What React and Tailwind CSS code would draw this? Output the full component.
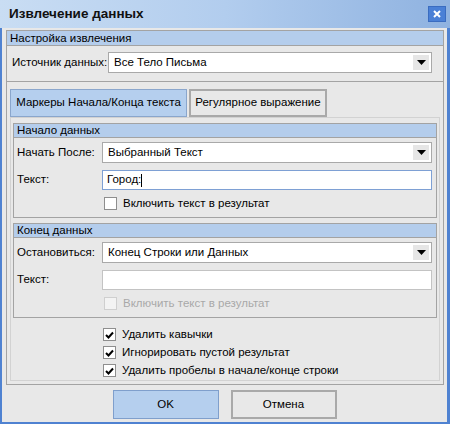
import React from "react";

const font = { fontFamily: '"Liberation Sans", Arial, sans-serif' };

const Arrow = () => (
  <div className="w-[16px] h-full bg-[#e6e6e6] flex items-center justify-center">
    <svg width="9" height="5" viewBox="0 0 9 5">
      <path d="M0 0 H9 L4.5 5 Z" fill="#000" />
    </svg>
  </div>
);

const Select = ({ value, h = "h-[21px]" }) => (
  <div className={`flex-1 ${h} bg-white border border-[#a9a9a9] flex items-center`}>
    <span className="flex-1 pl-[5px] text-[11.5px] text-black leading-none whitespace-nowrap">{value}</span>
    <div className="h-full py-[2px] pr-[2px]">
      <Arrow />
    </div>
  </div>
);

const Check = ({ checked, disabled }) => (
  <div
    className={`w-[13px] h-[13px] shrink-0 border flex items-center justify-center ${
      disabled ? "border-[#cfcfcf] bg-[#f3f3f3]" : "border-[#8e8e8e] bg-white"
    }`}
  >
    {checked && (
      <svg width="9" height="8" viewBox="0 0 9 8">
        <path d="M1 4 L3.5 6.5 L8 1.5" stroke="#000" strokeWidth="2" fill="none" />
      </svg>
    )}
  </div>
);

const CheckRow = ({ label, checked, disabled }) => (
  <div className="flex items-center gap-[6px] h-[13px]">
    <Check checked={checked} disabled={disabled} />
    <span
      className={`text-[11.5px] leading-none whitespace-nowrap ${
        disabled ? "text-[#a8a8a8]" : "text-black"
      }`}
    >
      {label}
    </span>
  </div>
);

const Section = ({ title, label, value, text, focused, disabled }) => (
  <div className="h-[95px] mt-[5px] border border-[#a3a3a3] flex flex-col">
    <div className="h-[14px] bg-[#b4cdec] border-b border-[#a3a3a3] pl-[3px] text-[11.5px] leading-[13px] text-black whitespace-nowrap">
      {title}
    </div>
    <div className="pl-[3px] pr-[4px] pt-[4px] flex flex-col">
      <div className="h-[21px] flex items-center">
        <span className="w-[85px] shrink-0 text-[11.5px] leading-none text-black whitespace-nowrap">{label}</span>
        <Select value={value} h="h-[21px]" />
      </div>
      <div className="h-[20px] flex items-center mt-[7px]">
        <span className="w-[85px] shrink-0 text-[11.5px] leading-none text-black">Текст:</span>
        <div
          className={`flex-1 h-[20px] bg-white border flex items-center ${
            focused ? "border-[#7ea0d4]" : "border-[#c3c3c3]"
          }`}
        >
          <span className="pl-[4px] text-[11.5px] text-black leading-none">{text}</span>
          {focused && <span className="w-[1px] h-[13px] bg-black" />}
        </div>
      </div>
      <div className="ml-[87px] mt-[7px]">
        <CheckRow label="Включить текст в результат" disabled={disabled} />
      </div>
    </div>
  </div>
);

export default function App() {
  return (
    <div className="w-[450px] h-[424px] flex flex-col bg-[#4f82d1]" style={font}>
      {/* Title bar */}
      <div className="h-[28px] shrink-0 flex items-center justify-between bg-gradient-to-r from-[#c9ddf3] via-[#b2cdee] to-[#8fb2e0] pl-[9px] pr-[4px]">
        <span className="text-[13.5px] font-bold text-[#111]">Извлечение данных</span>
        <div className="w-[18px] h-[16px] bg-[#4a80d6] border border-[#3a6cc0] flex items-center justify-center">
          <svg width="8" height="8" viewBox="0 0 8 8">
            <path d="M1 1 L7 7 M7 1 L1 7" stroke="#fff" strokeWidth="2" />
          </svg>
        </div>
      </div>

      {/* Body */}
      <div className="flex-1 ml-[2px] mr-[3px] mb-[2px] bg-[#e8e8e8] pt-[2px] pl-[4px] flex flex-col">
        <div className="w-[438px] h-[355px] shrink-0 border border-[#a3a3a3] flex flex-col">
          {/* Extraction settings */}
          <div className="h-[51px] border-b border-[#a3a3a3] flex flex-col">
            <div className="h-[15px] bg-[#b4cdec] border-b border-[#a3a3a3] pl-[3px] text-[11.5px] leading-[14px] text-black">
              Настройка извлечения
            </div>
            <div className="flex items-center pl-[5px] pr-[11px] pt-[6px]">
              <span className="w-[96px] shrink-0 text-[11.5px] leading-none text-black whitespace-nowrap">
                Источник данных:
              </span>
              <Select value="Все Тело Письма" h="h-[21px]" />
            </div>
          </div>

          {/* Tabs */}
          <div className="pl-[3px] pt-[7px] flex">
            <div className="w-[177px] h-[28px] bg-[#b5cfee] border border-[#8aa6cc] flex items-center justify-center text-[11.5px] text-black whitespace-nowrap">
              Маркеры Начала/Конца текста
            </div>
            <div className="ml-[2px] w-[138px] h-[28px] bg-[#e8e8e8] border-2 border-[#a9a9a9] flex items-center justify-center text-[11.5px] text-black whitespace-nowrap">
              Регулярное выражение
            </div>
          </div>

          {/* Tab content */}
          <div className="ml-[3px] w-[430px] h-[264px] border border-[#d2d2d2] px-[2px] flex flex-col">
            <Section
              title="Начало данных"
              label="Начать После:"
              value="Выбранный Текст"
              text="Город:"
              focused
            />
            <Section
              title="Конец данных"
              label="Остановиться:"
              value="Конец Строки или Данных"
              text=""
              disabled
            />
            <div className="pl-[90px] pt-[10px] flex flex-col gap-[5px]">
              <CheckRow label="Удалить кавычки" checked />
              <CheckRow label="Игнорировать пустой результат" checked />
              <CheckRow label="Удалить пробелы в начале/конце строки" checked />
            </div>
          </div>
        </div>

        {/* Buttons */}
        <div className="flex justify-center gap-[12px] mt-[5px] pr-[4px]">
          <button className="w-[106px] h-[29px] bg-[#b5cfee] border border-[#7f9fcc] text-[11.5px] text-black">
            OK
          </button>
          <button className="w-[106px] h-[29px] bg-[#e8e8e8] border-2 border-[#a9a9a9] text-[11.5px] text-black">
            Отмена
          </button>
        </div>
      </div>
    </div>
  );
}
